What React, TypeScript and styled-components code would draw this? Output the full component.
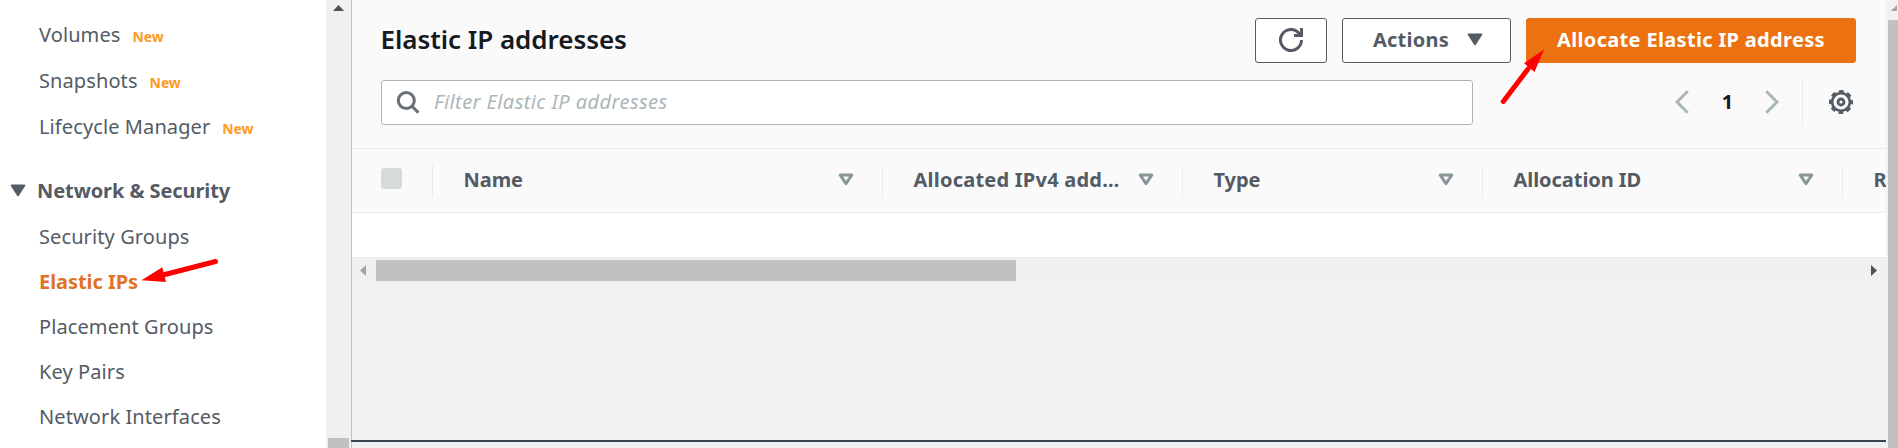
import React from 'react';
import styled, { createGlobalStyle, css } from 'styled-components';

const GlobalStyle = createGlobalStyle`
  *, *::before, *::after { box-sizing: border-box; }
  body {
    margin: 0;
    overflow: hidden;
    background: #f2f2f2;
    font-family: "Noto Sans", sans-serif;
    font-size: 20px;
    color: #545b64;
  }
  svg { display: block; flex: none; }
`;

const Page = styled.div`
  position: relative;
  display: flex;
  width: 1898px;
  height: 448px;
  overflow: hidden;
`;

/* ---------- side navigation ---------- */

const Sidebar = styled.nav`
  flex: 0 0 326px;
  background: #fff;
  padding-top: 11px;
`;

const NavGroup = styled.div<{ $rowHeight: number }>`
  display: grid;
  grid-auto-rows: ${(p) => p.$rowHeight}px;
  padding-left: 39px;
`;

const NavLink = styled.a<{ $active?: boolean }>`
  display: flex;
  align-items: center;
  letter-spacing: 0.1px;
  white-space: nowrap;
  ${(p) =>
    p.$active &&
    css`
      color: #e07327;
      font-weight: 700;
      letter-spacing: -0.05px;
    `}
`;

const NewBadge = styled.span`
  margin: 5px 0 0 12px;
  font-size: 14px;
  font-weight: 700;
  letter-spacing: -0.1px;
  color: #ff9a1f;
`;

const NavHeading = styled.div`
  display: flex;
  align-items: center;
  gap: 11px;
  height: 48px;
  margin-top: 17px;
  padding-left: 10px;
  font-weight: 700;
  letter-spacing: -0.08px;
  white-space: nowrap;
`;

/* ---------- scrollbars ---------- */

const NavScrollbar = styled.div`
  flex: 0 0 26px;
  display: flex;
  flex-direction: column;
  align-items: center;
  justify-content: space-between;
  padding: 5px 1px 0 1px;
  background: #f0f0f0;
  border-right: 1px solid #c4c4c4;
`;

const NavThumb = styled.div`
  width: 21px;
  height: 10px;
  background: #c1c1c1;
`;

const PageScrollbar = styled.div`
  flex: 0 0 12px;
  padding: 5px 0 0 2px;
  overflow: hidden;
  background: #f1f1f1;
`;

const PageThumb = styled.div`
  height: 428px;
  margin-top: 9px;
  background: #c1c1c1;
`;

const TableScrollbar = styled.div`
  display: flex;
  align-items: center;
  height: 26px;
  padding: 0 9px 0 8px;
  background: #f0f0f0;
  border-top: 1px solid #e6e8e8;
`;

const TableThumb = styled.div`
  width: 640px;
  height: 21px;
  margin: 0 auto 1px 10px;
  background: #c1c1c1;
`;

/* ---------- main panel ---------- */

const Main = styled.main`
  flex: 1;
  min-width: 0;
  display: flex;
  flex-direction: column;
`;

const Toolbar = styled.header`
  height: 149px;
  padding: 18px 30px 0 29px;
  background: #fafafa;
  border-bottom: 1px solid #eaeded;
`;

const ToolbarRow = styled.div`
  display: flex;
  align-items: center;
  height: 45px;
  & + & { margin-top: 17px; }
`;

const Title = styled.h1`
  margin: 0 auto 0 -0.5px;
  padding-bottom: 3px;
  font-size: 26px;
  line-height: 36px;
  font-weight: 600;
  letter-spacing: -0.05px;
  color: #16191f;
`;

const Button = styled.button<{ $primary?: boolean; $width: number }>`
  display: flex;
  align-items: center;
  justify-content: center;
  gap: 18px;
  width: ${(p) => p.$width}px;
  height: 45px;
  margin-left: 15px;
  padding: 0 0 2px;
  border: 1px solid #545b64;
  border-radius: 3px;
  background: #fff;
  color: #545b64;
  font: 700 20px "Noto Sans", sans-serif;
  letter-spacing: 0.25px;
  white-space: nowrap;
  ${(p) =>
    p.$primary &&
    css`
      border-color: #ec7211;
      background: #ec7211;
      color: #fff;
      letter-spacing: 0.33px;
    `}
`;

const ActionsButton = styled(Button)`
  padding-left: 3px;
`;

const SearchBox = styled.div`
  display: flex;
  align-items: center;
  gap: 14px;
  width: 1092px;
  height: 45px;
  padding: 0 14px 2px;
  border: 1px solid #aab7b8;
  border-radius: 3px;
  background: #fff;
`;

const Placeholder = styled.span`
  font-style: italic;
  letter-spacing: 0.42px;
  color: #aab7b8;
`;

const Pager = styled.div`
  display: flex;
  align-items: center;
  margin-left: auto;
  padding: 0 23px 1px 0;
`;

const PageNumber = styled.span`
  width: 76px;
  padding: 0 0 1px 1px;
  text-align: center;
  font-weight: 700;
  color: #16191f;
`;

const Settings = styled.div`
  display: flex;
  align-items: center;
  height: 45px;
  padding: 0 3px 1px 26px;
  border-left: 1px solid #eaeded;
`;

/* ---------- table ---------- */

const TableHead = styled.div`
  display: flex;
  align-items: center;
  height: 64px;
  overflow: hidden;
  background: #fafafa;
  border-bottom: 1px solid #eaeded;
`;

const HeadCell = styled.div<{ $width: number }>`
  flex: 0 0 ${(p) => p.$width}px;
  display: flex;
  align-items: center;
  justify-content: space-between;
  height: 32px;
  padding: 0 28px 2px 30.5px;
  border-right: 1px solid #eaeded;
  font-weight: 700;
  white-space: nowrap;
`;

const HeadLabel = styled.span<{ $spacing?: number }>`
  letter-spacing: ${(p) => p.$spacing ?? -0.05}px;
`;

const SelectAll = styled(HeadCell)`
  padding: 0 0 0 29px;
`;

const LastCell = styled(HeadCell)`
  border-right: 0;
  padding-right: 0;
`;

const Checkbox = styled.span`
  width: 21px;
  height: 21px;
  margin-top: -4px;
  border-radius: 3px;
  background: #d5dbdb;
`;

const EmptyBody = styled.div`
  height: 44px;
  background: #fff;
`;

const SplitLine = styled.div`
  height: 2px;
  margin: auto 0 6px -1px;
  background: #37444c;
`;

const Annotations = styled.svg`
  position: absolute;
  inset: 0;
  pointer-events: none;
`;

/* ---------- icons ---------- */

const CaretDown = () => (
  <svg width="16" height="13" viewBox="0 0 16 13">
    <path d="M1.7 1.5h12.6L8 11.2z" fill="#545b64" stroke="#545b64" strokeWidth="2" strokeLinejoin="round" />
  </svg>
);

const SortIcon = () => (
  <svg width="16" height="13" viewBox="0 0 16 13">
    <path d="M2.2 2h11.6L8 10.6z" fill="none" stroke="#879596" strokeWidth="3" strokeLinejoin="round" />
  </svg>
);

const ScrollArrow = ({ points, w, h, color }: { points: string; w: number; h: number; color: string }) => (
  <svg width={w} height={h} viewBox={`0 0 ${w} ${h}`}>
    <polygon points={points} fill={color} />
  </svg>
);

const SearchIcon = () => (
  <svg width="24" height="24" viewBox="0 0 24 24" fill="none" stroke="#687078" strokeWidth="3">
    <circle cx="10.3" cy="10.5" r="8" />
    <path d="M16 16.2l6.4 6.4" />
  </svg>
);

const RefreshIcon = () => (
  <svg width="24" height="24" viewBox="0 0 24 24" fill="none" stroke="#545b64" strokeWidth="3">
    <path d="M22.5 12A10.5 10.5 0 1 1 18.8 4L21.5 7" />
    <path d="M22.5 0v7.5H15" />
  </svg>
);

const Chevron = ({ right }: { right?: boolean }) => (
  <svg width="14" height="24" viewBox="0 0 14 24" fill="none" stroke="#aab7b8" strokeWidth="3">
    <path d={right ? 'M1.3 1.3L12 12 1.3 22.7' : 'M12.7 1.3L2 12l10.7 10.7'} />
  </svg>
);

const GearIcon = () => (
  <svg width="24" height="24" viewBox="0 0 24 24" fill="none" stroke="#545b64">
    <circle cx="12" cy="12" r="3" strokeWidth="2.8" />
    <circle cx="12" cy="12" r="8.9" strokeWidth="2.6" />
    <circle cx="12" cy="12" r="10.8" strokeWidth="2.4" strokeDasharray="4.8 3.682" strokeDashoffset="2.4" />
  </svg>
);

/* ---------- content ---------- */

const storageLinks = ['Volumes', 'Snapshots', 'Lifecycle Manager'];
const networkLinks = ['Security Groups', 'Elastic IPs', 'Placement Groups', 'Key Pairs', 'Network Interfaces'];
const columns = [
  { label: 'Name', width: 450 },
  { label: 'Allocated IPv4 add…', width: 300, spacing: 0.23 },
  { label: 'Type', width: 300 },
  { label: 'Allocation ID', width: 360 },
];

export default function App() {
  return (
    <>
      <GlobalStyle />
      <Page>
        <Sidebar>
          <NavGroup $rowHeight={46}>
            {storageLinks.map((label) => (
              <NavLink key={label}>
                {label}
                <NewBadge>New</NewBadge>
              </NavLink>
            ))}
          </NavGroup>
          <NavHeading>
            <CaretDown />
            Network &amp; Security
          </NavHeading>
          <NavGroup $rowHeight={45}>
            {networkLinks.map((label) => (
              <NavLink key={label} $active={label === 'Elastic IPs'}>
                {label}
              </NavLink>
            ))}
          </NavGroup>
        </Sidebar>
        <NavScrollbar>
          <ScrollArrow points="0,6 5.5,0 11,6" w={11} h={6} color="#505050" />
          <NavThumb />
        </NavScrollbar>

        <Main>
          <Toolbar>
            <ToolbarRow>
              <Title>Elastic IP addresses</Title>
              <Button $width={72} aria-label="Refresh">
                <RefreshIcon />
              </Button>
              <ActionsButton $width={169}>
                Actions
                <CaretDown />
              </ActionsButton>
              <Button $primary $width={330}>
                Allocate Elastic IP address
              </Button>
            </ToolbarRow>
            <ToolbarRow>
              <SearchBox>
                <SearchIcon />
                <Placeholder>Filter Elastic IP addresses</Placeholder>
              </SearchBox>
              <Pager>
                <Chevron />
                <PageNumber>1</PageNumber>
                <Chevron right />
              </Pager>
              <Settings>
                <GearIcon />
              </Settings>
            </ToolbarRow>
          </Toolbar>
          <TableHead>
            <SelectAll $width={81}>
              <Checkbox />
            </SelectAll>
            {columns.map((c) => (
              <HeadCell key={c.label} $width={c.width}>
                <HeadLabel $spacing={c.spacing}>{c.label}</HeadLabel>
                <SortIcon />
              </HeadCell>
            ))}
            <LastCell $width={43}>
              <HeadLabel>R</HeadLabel>
            </LastCell>
          </TableHead>
          <EmptyBody />
          <TableScrollbar>
            <ScrollArrow points="6,0 0,5.5 6,11" w={6} h={11} color="#a3a3a3" />
            <TableThumb />
            <ScrollArrow points="0,0 6,5.5 0,11" w={6} h={11} color="#505050" />
          </TableScrollbar>
          <SplitLine />
        </Main>
        <PageScrollbar>
          <ScrollArrow points="3,6 9,0 9,6" w={10} h={6} color="#a3a3a3" />
          <PageThumb />
        </PageScrollbar>

        <Annotations width="1898" height="448" viewBox="0 0 1898 448">
          <g stroke="#fe0000" fill="#fe0000" strokeWidth="5" strokeLinecap="round">
            <path d="M163 275L215.5 261.5" />
            <path d="M141.5 280.3L162.3 267.3 166 281.9z" stroke="none" />
            <path d="M1528 69L1503.3 101.5" />
            <path d="M1544 49.5L1524 63.3 1534.5 72z" stroke="none" />
          </g>
        </Annotations>
      </Page>
    </>
  );
}
